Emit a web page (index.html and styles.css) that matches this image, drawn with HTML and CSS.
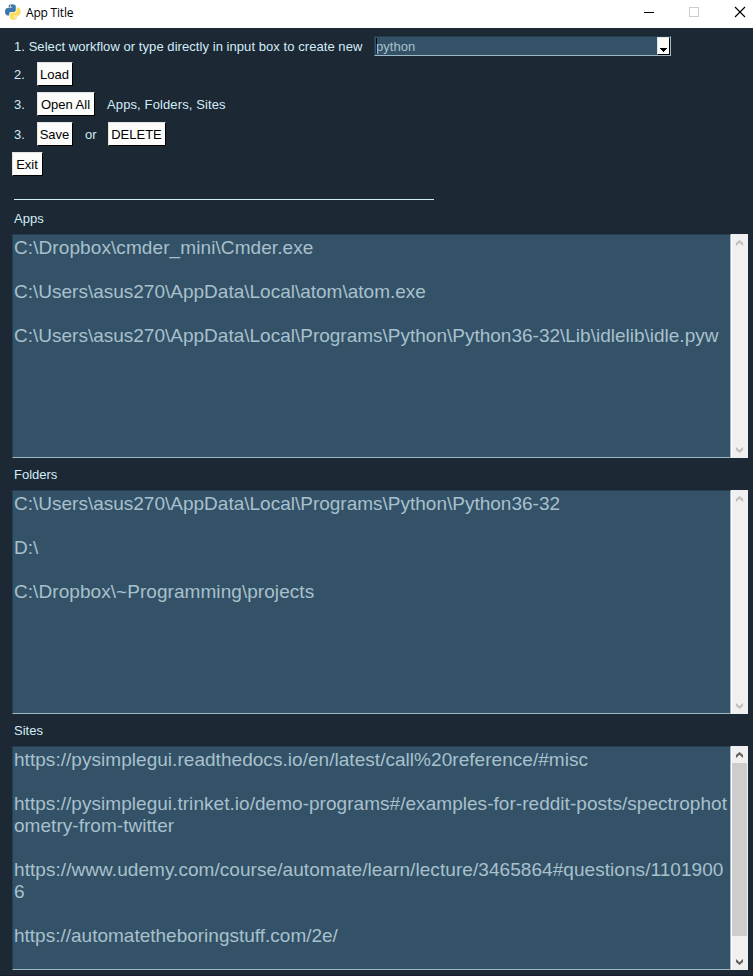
FILE: index.html
```html
<!DOCTYPE html>
<html lang="en">
<head>
<meta charset="utf-8">
<title>App Title</title>
<link rel="stylesheet" href="styles.css">
</head>
<body>
<div class="window">
  <header class="titlebar">
    <svg class="logo" width="16" height="16" viewBox="0 0 16 16">
      <path fill="#3b78a8" d="M3.6 2.4Q3.800.300 7 .3Q10.800.300 10.800 2.600V6Q10.800 7.900 8.700 7.900H6Q4.200 7.900 4.200 9.500V11.600H2.700Q0 11.300 0 7.600Q0 4.200 2.800 4H7.200V3.500H3.600Z"/>
      <path fill="#fbdc62" d="M11.500 3.600H12.900Q15.600 3.900 15.600 7.800Q15.600 11.700 12.800 11.700H8.400V12.200H12V13.400Q11.800 15.700 8.300 15.700Q4.800 15.700 4.800 13.300V10.300Q4.800 8.500 6.800 8.500H9.500Q11.500 8.500 11.500 6.700Z"/>
      <circle cx="5.600" cy="2.200" r=".7" fill="#fff"/><circle cx="10" cy="13.700" r=".7" fill="#fff"/>
    </svg>
    <span class="title">App Title</span>
    <svg class="controls" width="109" height="28" viewBox="0 0 109 28" shape-rendering="crispEdges">
      <path fill="#000" d="M0 12h10v1H0z"/>
      <path fill="none" stroke="#ccc" d="M45.500 7.500h9v9h-9z"/>
      <path fill="none" stroke="#000" stroke-width="1.150" shape-rendering="auto" d="M91 7l10 10M101 7l-10 10"/>
    </svg>
  </header>
  <main class="content">
    <div class="row first">
      <span class="lead">1. Select workflow or type directly in input box to create new</span>
      <div class="combo"><span class="caret"></span><span class="value">python</span><span class="drop"><svg width="8" height="4" viewBox="0 0 8 4" shape-rendering="crispEdges"><path d="M0 0h7v1H6v1H5v1H4v1H3V3H2V2H1V1H0z"/></svg></span></div>
    </div>
    <div class="row"><span class="num">2.</span><button class="btn w36">Load</button></div>
    <div class="row"><span class="num">3.</span><button class="btn w58">Open All</button><span class="note">Apps, Folders, Sites</span></div>
    <div class="row"><span class="num">3.</span><button class="btn w36">Save</button><span class="note or">or</span><button class="btn w58">DELETE</button></div>
    <div class="row exit"><button class="btn w31">Exit</button></div>
    <div class="rule"></div>

    <div class="label">Apps</div>
    <section class="pane">
      <div class="text"><p class="loose">C:\Dropbox\cmder_mini\Cmder.exe</p><p>C:\Users\asus270\AppData\Local\atom\atom.exe</p><p>C:\Users\asus270\AppData\Local\Programs\Python\Python36-32\Lib\idlelib\idle.pyw</p></div>
      <div class="scroll off"><svg class="arrow" width="7" height="6" viewBox="0 0 7 6"><path d="M0 6V3L3.500 0 7 3V6L3.500 2.700z"/></svg><svg class="arrow" width="7" height="6" viewBox="0 0 7 6"><path d="M0 0V3L3.500 6 7 3V0L3.500 3.300z"/></svg></div>
    </section>
    <div class="label">Folders</div>
    <section class="pane">
      <div class="text"><p>C:\Users\asus270\AppData\Local\Programs\Python\Python36-32</p><p>D:\</p><p class="open">C:\Dropbox\~Programming\projects</p></div>
      <div class="scroll off"><svg class="arrow" width="7" height="6" viewBox="0 0 7 6"><path d="M0 6V3L3.500 0 7 3V6L3.500 2.700z"/></svg><svg class="arrow" width="7" height="6" viewBox="0 0 7 6"><path d="M0 0V3L3.500 6 7 3V0L3.500 3.300z"/></svg></div>
    </section>
    <div class="label">Sites</div>
    <section class="pane">
      <div class="text"><p class="slight">https://pysimplegui.readthedocs.io/en/latest/call%20reference/#misc</p><p class="slight">https://pysimplegui.trinket.io/demo-programs#/examples-for-reddit-posts/spectrophot<br>ometry-from-twitter</p><p class="open">https://www.udemy.com/course/automate/learn/lecture/3465864#questions/1101900<br>6</p><p>https://automatetheboringstuff.com/2e/</p></div>
      <div class="scroll"><svg class="arrow" width="7" height="6" viewBox="0 0 7 6"><path d="M0 6V3L3.500 0 7 3V6L3.500 2.700z"/></svg><span class="thumb"></span><svg class="arrow" width="7" height="6" viewBox="0 0 7 6"><path d="M0 0V3L3.500 6 7 3V0L3.500 3.300z"/></svg></div>
    </section>
  </main>
</div>
</body>
</html>
```
FILE: styles.css
```css
* { box-sizing: border-box; }
body { margin: 0; background: #1c2834; }
.window {
  width: 753px;
  height: 976px;
  overflow: hidden;
  border-bottom: 1px solid #1b1b2e;
  background: #1c2834;
  color: #d2edf8;
  font: 13px/16px "Liberation Sans", Arial, sans-serif;
  white-space: nowrap;
}
.titlebar {
  display: flex;
  height: 28px;
  padding-left: 5px;
  background: #fff;
  color: #000;
}
.logo { margin-top: 4px; }
.title {
  margin-left: 5px;
  font: 12px/26px "Open Sans", "Noto Sans", sans-serif;
  letter-spacing: -0.2px;
}
.controls { margin-left: auto; }
.content { padding-left: 12px; }
.row { display: flex; align-items: center; height: 24px; margin-bottom: 6px; padding-left: 2px; }
.row.first { height: 20px; margin: 8px 0 6px; }
.row.exit { padding-left: 0; }
.lead { width: 360px; padding-top: 2px; letter-spacing: 0.06px; }
.combo {
  display: flex;
  width: 297px;
  height: 20px;
  border: 1px solid;
  border-color: #243f50 #9fb8c5 #9fb8c5 #243f50;
  background: #335267;
  color: #a9c0cd;
}
.caret { width: 1px; height: 16px; margin: 1px 0 0 1px; background: #000; }
.value { margin-left: -1px; line-height: 19px; letter-spacing: 0.05px; }
.drop {
  width: 13px;
  height: 18px;
  margin-left: auto;
  padding: 10px 0 0 2px;
  border: 1px solid;
  border-color: #e3e3e3 #000 #000 #e3e3e3;
  background: #fbfbfa;
  line-height: 0;
}
.num { width: 23px; padding-top: 2px; }
.btn {
  height: 24px;
  padding: 2px 1px 0 0;
  border: 1px solid;
  border-color: #e3e3e3 #000 #000 #e3e3e3;
  border-radius: 0;
  background: #fcfcfa;
  color: #000;
  font: inherit;
  text-align: center;
}
.w31 { width: 31px; }
.w36 { width: 36px; }
.w58 { width: 58px; }
.note { margin-left: 12px; padding-top: 2px; letter-spacing: 0.12px; }
.note.or { width: 23px; }
.rule { width: 420px; height: 1px; margin: 23px 0 0 2px; background: #d2edf8; }
.label { height: 32px; padding-left: 2px; line-height: 33px; }
.rule + .label { height: 34px; line-height: 37px; }
.pane { display: flex; width: 736px; height: 224px; }
.text {
  width: 719px;
  padding: 2px 0 0 1px;
  overflow: hidden;
  border: 1px solid;
  border-color: #243f50 #9fb8c5 #9fb8c5 #243f50;
  background: #335267;
  color: #a9c0cd;
  font-size: 19px;
  line-height: 22px;
}
.text p { margin: 0 0 22px; }
.text .loose { letter-spacing: 0.09px; }
.text .open { letter-spacing: 0.06px; }
.text .slight { letter-spacing: 0.04px; }
.scroll {
  display: flex;
  flex-direction: column;
  align-items: center;
  justify-content: space-between;
  width: 17px;
  padding: 6px 1px 5px 0;
  border-left: 1px solid #fff;
  background: #f0f0f0;
}
.thumb { width: 15px; height: 173px; margin: 5px 0 auto; background: #cdcdcd; }
.arrow { flex: none; fill: #606060; }
.off .arrow { fill: #bfbfbf; }
```
